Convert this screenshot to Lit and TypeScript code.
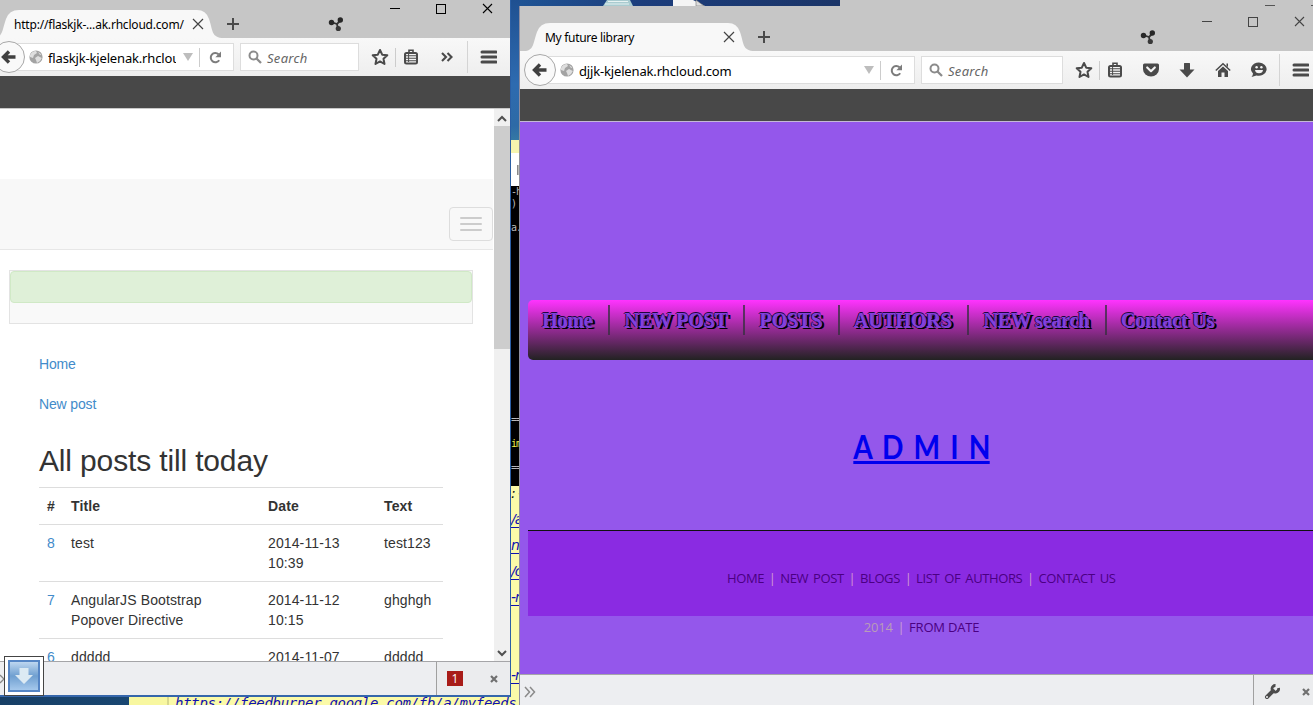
import { LitElement, html, svg, css } from "lit";
import { customElement, property } from "lit/decorators.js";

const closeX = (s: number) => svg`<path d="M1 1L${s - 1} ${s - 1}M${s - 1} 1L1 ${s - 1}"/>`;

const icons: Record<string, unknown> = {
  star: html`<svg width="18" height="18" viewBox="0 0 18 18"><path d="M9 2L11.2 6.7L16.3 7.3L12.5 10.8L13.5 16L9 13.4L4.5 16L5.5 10.8L1.7 7.3L6.8 6.7Z" fill="none" stroke="#4a4a4a" stroke-width="2" stroke-linejoin="round"/></svg>`,
  clip: html`<svg width="18" height="18" viewBox="0 0 18 18"><path d="M7 4.500V2.300h4V4.500" fill="none" stroke="#4a4a4a" stroke-width="1.600"/><rect x="3" y="5" width="12" height="10.500" rx="1.500" fill="#f4f4f4" stroke="#4a4a4a" stroke-width="2"/><path d="M4 7.800H14M4 10.300H14M4 12.800H14" stroke="#4a4a4a" stroke-width="1.100"/><path d="M6.600 6V14" stroke="#4a4a4a" stroke-width="1"/></svg>`,
  more: html`<svg width="14" height="12" viewBox="0 0 14 12"><path d="M2 2L6 6L2 10M7.5 2L11.5 6L7.5 10" fill="none" stroke="#4a4a4a" stroke-width="2.1"/></svg>`,
  menu: html`<svg width="18" height="16" viewBox="0 0 18 16"><path d="M3 3H17M3 8H17M3 13H17" stroke="#4a4a4a" stroke-width="3" stroke-linecap="round"/></svg>`,
  pocket: html`<svg width="18" height="18" viewBox="0 0 18 18"><path d="M2.5 2.5H15.5Q17 2.5 17 4V8A8 7.6 0 0 1 1 8V4Q1 2.500 2.500 2.500Z" fill="#4a4a4a"/><path d="M5.200 6.500L9 10.200L12.800 6.500" fill="none" stroke="#f4f4f4" stroke-width="2.200" stroke-linecap="round" stroke-linejoin="round"/></svg>`,
  down: html`<svg width="18" height="18" viewBox="0 0 18 18"><path d="M6 2.500Q6 2 6.500 2H11.500Q12 2 12 2.500V8.500H16.500L9 16.500L1.500 8.500H6Z" fill="#4a4a4a"/></svg>`,
  home: html`<svg width="18" height="18" viewBox="0 0 18 18"><path d="M1.800 9.500L9 2.800L16.200 9.500" fill="none" stroke="#4a4a4a" stroke-width="1.500"/><path d="M12.500 2.500H14V6L12.500 5Z M4 10L9 5.400L14 10V16H10.500V11.500H7.500V16H4Z" fill="#4a4a4a"/></svg>`,
  chat: html`<svg width="18" height="18" viewBox="0 0 18 18"><path d="M9 1.500A7.800 6.600 0 1 1 6.500 14.400L1.500 16Q3 14 3 12.500A7.800 6.600 0 0 1 9 1.500Z" fill="#4a4a4a"/><path d="M5 9H13Q12.500 12.300 9 12.300T5 9Z" fill="#f4f4f4"/><circle cx="6.600" cy="6.300" r="1.200" fill="#f4f4f4"/><circle cx="11.400" cy="6.300" r="1.200" fill="#f4f4f4"/></svg>`,
};

@customElement("browser-head")
export class BrowserHead extends LitElement {
  @property() tab = "";
  @property() url = "";
  @property({ type: Boolean, reflect: true }) narrow = false;

  static styles = css`
    :host { display: block; font-family: "Noto Sans", "Open Sans", sans-serif; color: #000; }
    svg { display: block; flex: none; }
    .title { height: 45px; background: #c6c6c6; display: flex; align-items: flex-end; position: relative; }
    :host([narrow]) .title { height: 38px; }
    .tab { position: relative; width: 228px; height: 28px; margin-left: 4px; display: flex; align-items: center; }
    :host([narrow]) .tab { margin-left: -7px; }
    .shape { position: absolute; left: 0; top: 0; }
    .label { position: relative; flex: 1; font-size: 12px; padding-left: 21px; white-space: nowrap; letter-spacing: -0.3px; }
    :host([narrow]) .label { letter-spacing: -0.2px; }
    .tab .x { position: relative; margin-right: 17px; }
    .plus { margin: 0 0 7px 5px; }
    .share { position: absolute; left: 620px; bottom: 6px; }
    .controls { position: absolute; display: flex; gap: 36px; left: 682px; top: 10px; align-items: center; }
    :host([narrow]) .share { left: 328px; }
    :host([narrow]) .controls { left: 390px; top: 3px; }
    .bar { height: 38px; background: linear-gradient(#f8f8f8, #eeeeee); display: flex; align-items: center; }
    .back { width: 30px; height: 30px; border: 1px solid #a8a8a8; border-radius: 50%; background: #f9f9f9; display: grid; place-items: center; margin-left: 4px; z-index: 1; flex: none; }
    :host([narrow]) .back { margin-left: -7px; }
    .field { box-sizing: border-box; height: 28px; background: #fff; border: 1px solid #ddd; display: flex; align-items: center; }
    .url { width: 376px; margin-left: -17px; padding-left: 20px; }
    :host([narrow]) .url { width: 226px; }
    .addr { flex: 1; min-width: 0; overflow: hidden; white-space: nowrap; font-size: 13px; margin: 1px 7px 0 5px; letter-spacing: -0.16px; }
    .sep { width: 1px; height: 19px; background: #ccc; }
    .drop { margin-right: 6px; }
    .reload { margin: 0 11px 0 9px; }
    .search { width: 142px; margin-left: 6px; padding-left: 7px; font-size: 13px; font-style: italic; color: #666; gap: 5px; letter-spacing: 0.3px; }
    .search span { margin-top: 2px; }
    :host([narrow]) .search { width: 119px; margin-left: 6px; }
    .tools { display: flex; align-items: center; margin-left: 12px; }
    .tools .sep { margin: 0 6px; }
    .rest { display: flex; gap: 18px; margin-left: 18px; align-items: center; }
    .edge { width: 1px; height: 32px; background: #d4d4d4; margin: 0 11px; }
    :host([narrow]) .rest { margin-left: 20px; }
    :host([narrow]) .edge { margin-left: 13px; }
    .dark { height: 32px; background: #484848; border-bottom: 1px solid #c4b9d8; }
    :host([narrow]) .dark { border-color: #c8c8c8; height: 32px; }
  `;

  render() {
    const ink = this.narrow ? "#000" : "#444";
    return html`
      <div class="title">
        <div class="tab">
          <svg class="shape" width="232" height="28"><path d="M0 28C10 28 9 20 13 9Q16 0 26 0H204Q213 0 216 9C220 20 218 28 231 28Z" fill="#f8f8f8"/></svg>
          <span class="label">${this.tab}</span>
          <svg class="x" width="12" height="12" fill="none" stroke="#444" stroke-width="1.200">${closeX(12)}</svg>
        </div>
        <svg class="plus" width="14" height="14"><path d="M7 1V13M1 7H13" stroke="#4a4a4a" stroke-width="2"/></svg>
        <svg class="share" width="16" height="16"><path d="M3 6L9 8L13 4M9 8L10 13" stroke="#333" stroke-width="1.800" fill="none"/><circle cx="3.500" cy="6.500" r="2.700" fill="#282828"/><circle cx="12.300" cy="4" r="2.700" fill="#282828"/><circle cx="10.300" cy="12.500" r="2.600" fill="#383838"/></svg>
        <div class="controls">
          <svg width="10" height="11"><path d="M0 5.500H10" stroke=${ink}/></svg>
          <svg width="10" height="11"><rect x="0.500" y="1.500" width="9" height="9" fill="none" stroke=${ink}/></svg>
          <svg width="11" height="11" fill="none" stroke=${ink} stroke-width="1.100">${closeX(11)}</svg>
        </div>
      </div>
      <div class="bar">
        <div class="back"><svg width="16" height="14"><path d="M14.500 7H3M8 1.500L2.500 7L8 12.500" fill="none" stroke="#404040" stroke-width="3.400"/></svg></div>
        <div class="field url">
          <svg width="14" height="14"><circle cx="7" cy="7" r="6.600" fill="#a3a3a3"/><path d="M1 5Q3 1 7 1L8 3L5 5L4 8L1 7ZM9 2L12.500 4.500L11 5ZM6 8L9 6L12.800 8L11 11L8 13L7 10Z" fill="#dedede"/></svg>
          <span class="addr">${this.url}</span>
          <svg class="drop" width="10" height="8"><path d="M0 0H10L5 8Z" fill="#bdbdbd"/></svg>
          <span class="sep"></span>
          <svg class="reload" width="13" height="13"><path d="M10.200 9.200A4.600 4.600 0 1 1 9.500 3.300" fill="none" stroke="#7c7c7c" stroke-width="2"/><path d="M12 0.500V6.200H6.300Z" fill="#7c7c7c"/></svg>
        </div>
        <div class="field search">
          <svg width="14" height="14"><circle cx="5.500" cy="5.500" r="4" fill="none" stroke="#8b8b8b" stroke-width="2"/><path d="M8.500 8.500L13 13" stroke="#8b8b8b" stroke-width="2.300"/></svg>
          <span>Search</span>
        </div>
        <div class="tools">
          ${icons.star}<span class="sep"></span>${icons.clip}
          <div class="rest">
            ${this.narrow ? icons.more : html`${icons.pocket}${icons.down}${icons.home}${icons.chat}`}
          </div>
          <span class="edge"></span>${icons.menu}
        </div>
      </div>
      <div class="dark"></div>
    `;
  }
}

@customElement("posts-page")
export class PostsPage extends LitElement {
  static styles = css`
    :host { display: flex; height: 552px; background: #fff; overflow: hidden; font: 14px/20px "Liberation Sans", Arial, sans-serif; color: #333; }
    .page { width: 494px; flex: none; overflow: hidden; }
    .nav { box-sizing: border-box; width: 493px; height: 71px; margin-top: 70px; background: #f8f8f8; border-bottom: 1px solid #e7e7e7; display: flex; justify-content: flex-end; padding-top: 28px; }
    .toggle { box-sizing: border-box; width: 44px; height: 34px; border: 1px solid #ddd; border-radius: 4px; display: flex; flex-direction: column; gap: 4px; align-items: center; justify-content: center; }
    .toggle i { width: 22px; height: 2px; background: #ccc; border-radius: 1px; }
    .panel { box-sizing: border-box; width: 464px; height: 54px; margin: 20px 0 0 9px; background: #f9f9f9; border: 1px solid #e3e3e3; }
    .alert { box-sizing: border-box; height: 32px; background: #dff0d8; border: 1px solid #d0e9c6; border-radius: 4px; }
    .body { margin: 30px 0 0 39px; width: 404px; }
    a { color: #428bca; }
    p { margin: 0 0 20px; letter-spacing: -0.15px; }
    h2 { font-size: 30px; font-weight: 400; line-height: 33px; margin: 30px 0 10px; letter-spacing: -0.15px; }
    table { width: 404px; table-layout: fixed; border-collapse: collapse; letter-spacing: 0.12px; }
    th, td { box-sizing: border-box; text-align: left; vertical-align: top; padding: 8px; border-top: 1px solid #ddd; }
    th:first-child { padding-right: 0; }
    td:first-child { padding-right: 0; }
    .c1 { width: 24px; } .c2 { width: 197px; } .c3 { width: 116px; }
    td:nth-child(2) { padding-right: 40px; }
    td:nth-child(3) { padding-right: 30px; }
    .scroll { width: 16px; background: #f0f0f0; display: flex; flex-direction: column; }
    .scroll svg { margin: 6px 3px 4px; display: block; }
    .thumb { height: 223px; background: #cdcdcd; }
    .fill { flex: 1; }
  `;
  render() {
    const rows = [
      ["8", "test", "2014-11-13 10:39", "test123"],
      ["7", "AngularJS Bootstrap Popover Directive", "2014-11-12 10:15", "ghghgh"],
      ["6", "ddddd", "2014-11-07", "ddddd"],
    ];
    return html`
      <div class="page">
        <div class="nav"><div class="toggle"><i></i><i></i><i></i></div></div>
        <div class="panel"><div class="alert"></div></div>
        <div class="body">
          <p><a>Home</a></p>
          <p><a>New post</a></p>
          <h2>All posts till today</h2>
          <table>
            <tr><th class="c1">#</th><th class="c2">Title</th><th class="c3">Date</th><th>Text</th></tr>
            ${rows.map((r) => html`<tr><td><a>${r[0]}</a></td><td>${r[1]}</td><td>${r[2]}</td><td>${r[3]}</td></tr>`)}
          </table>
        </div>
      </div>
      <div class="scroll">
        <svg width="10" height="7"><path d="M1 6L5 2L9 6" fill="none" stroke="#505050" stroke-width="2"/></svg>
        <div class="thumb"></div><div class="fill"></div>
        <svg width="10" height="7"><path d="M1 1L5 5L9 1" fill="none" stroke="#505050" stroke-width="2"/></svg>
      </div>
    `;
  }
}

@customElement("library-page")
export class LibraryPage extends LitElement {
  static styles = css`
    :host { display: block; height: 552px; background: #9457eb; overflow: hidden; padding-left: 8px; box-sizing: border-box; }
    nav { box-sizing: border-box; margin-top: 178px; height: 60px; width: 800px; border-radius: 5px; background: linear-gradient(#ff33ff, #222222); display: flex; padding-top: 5px; }
    nav a { height: 30px; box-sizing: border-box; padding: 3px 16px 0 14px; border-right: 2px solid rgba(52, 48, 62, 0.75); font: bold 20px/24px "Liberation Serif", "Times New Roman", serif; color: #8340dc; text-shadow: 0 -1px 0 #20063c, -1px 0 0 #20063c, 1px 1px 0 #8340dc, 2px 2px 0 #000, 3px 2px 0 #000; white-space: nowrap; letter-spacing: -0.2px; }
    nav a:last-child { border: 0; }
    .admin { margin-top: 67px; width: 787px; height: 42px; text-align: center; font: 700 32px/40px Lato, sans-serif; color: #0000ee; }
    .admin a { display: inline-block; height: 34px; border-bottom: 3px solid #0000ee; letter-spacing: -0.4px; word-spacing: 4.5px; transform: scaleX(0.88); }
    footer { margin-top: 61px; width: 800px; height: 85px; background: #8a2be2; border-top: 1px solid #111; font: 13px/20px "Open Sans", sans-serif; color: #4b0082; }
    .links { display: flex; padding: 37px 0 0 199px; white-space: nowrap; letter-spacing: -0.38px; word-spacing: 2px; }
    i { font-style: normal; color: #d19ad0; padding: 0 4.7px; }
    .date { width: 787px; display: flex; justify-content: center; font: 13px/20px "Open Sans", sans-serif; color: #4b0082; margin-top: 1px; letter-spacing: -0.2px; }
    .date b { font-weight: 400; color: #b99cb8; }
    .date i { color: #c9a0d0; }
  `;
  render() {
    const links = ["HOME", "NEW POST", "BLOGS", "LIST OF AUTHORS", "CONTACT US"];
    return html`
      <nav>${["Home", "NEW POST", "POSTS", "AUTHORS", "NEW search", "Contact Us"].map((n) => html`<a>${n}</a>`)}</nav>
      <div class="admin"><a>A D M I N</a></div>
      <footer><div class="links">${links.map((l, n) => html`${n ? html`<i>|</i>` : ""}<span>${l}</span>`)}</div></footer>
      <div class="date"><b>2014</b><i>|</i><span>FROM DATE</span></div>
    `;
  }
}

@customElement("app-root")
export class AppRoot extends LitElement {
  static styles = css`
    :host { display: block; position: relative; width: 1313px; height: 705px; overflow: hidden; background: #1d4878; }
    svg { display: block; }
    .top { position: absolute; left: 511px; top: 0; width: 329px; height: 6px; background: linear-gradient(90deg, #1f5596, #1c3d7c 40%, #1b3568); }
    .top svg { position: absolute; left: 88px; top: 0; }
    .behind { position: absolute; left: 840px; top: 0; width: 473px; height: 6px; background: #c6c6c6; }
    .behind svg { margin-left: 425px; }
    .strip { position: absolute; left: 511px; top: 0; width: 9px; height: 705px; display: flex; flex-direction: column; overflow: hidden; font: 10px/12px "DejaVu Sans Mono", monospace; color: #bbb; }
    .sky { height: 140px; flex: none; background: linear-gradient(#1f5091, #2e6bb0 60%, #2d6aa6 90%, #3478a4); }
    .gold { height: 13px; flex: none; background: #f6f5ae; }
    .paper { height: 33px; flex: none; background: #fff; display: flex; justify-content: flex-end; align-items: center; }
    .paper i { width: 2px; height: 10px; background: #bbb; border-left: 1px solid #888; }
    .term { height: 300px; flex: none; background: #000; white-space: pre; overflow: hidden; letter-spacing: -1px; }
    .term em { font-style: normal; color: #f2f24a; }
    .note { flex: 1; background: #fbfaa8; color: #1010b0; font: italic 14px/26px "DejaVu Sans", sans-serif; white-space: pre; overflow: hidden; letter-spacing: -1px; }
    .note u { display: block; height: 26px; text-underline-offset: 3px; }
    .note u:first-child { text-decoration: none; margin-top: -6px; color: #111; }
    .under { position: absolute; left: 0; top: 696px; width: 520px; height: 9px; display: flex; overflow: hidden; background: linear-gradient(90deg, #173f66, #1f5c92); }
    .margin { margin-left: 129px; width: 38px; background: #f8f7a0; border-right: 2px solid #d9d88e; }
    .sheet { flex: 1; background: #fbfaa8; color: #1010b0; font: italic 14px/15px "DejaVu Sans Mono", monospace; padding-left: 6px; letter-spacing: -0.3px; white-space: nowrap; }
    .left { position: absolute; left: 0; top: 0; width: 510px; height: 695px; border-right: 1px solid #2a5ea4; border-bottom: 2px solid #3566ab; background: #eeeff1; overflow: hidden; }
    .right { position: absolute; left: 519px; top: 6px; width: 793px; height: 699px; border-left: 1px solid #8e8ea0; overflow: hidden; }
    .addons { box-sizing: border-box; height: 34px; background: #edeef1; border-top: 1px solid #a5a5a8; display: flex; align-items: center; justify-content: space-between; }
    .group { box-sizing: border-box; width: 74px; height: 33px; border-left: 1px solid #a0a0a0; background: #ebecee; display: flex; align-items: center; padding-left: 10px; gap: 27px; }
    .count { width: 16px; height: 15px; background: #a81c18; color: #fff; font: 12px/15px "Open Sans", sans-serif; text-align: center; }
    .right .addons { padding-left: 4px; }
    .right .group { width: 60px; padding-left: 10px; gap: 22px; }
    .save { position: absolute; left: 4px; top: 656px; width: 36px; height: 36px; padding: 1px; border: 1px solid #444; background: #fff; display: grid; place-items: center; }
  `;
  render() {
    const x = html`<svg width="8" height="8"><path d="M1 1L7 7M7 1L1 7" stroke="#707070" stroke-width="2.200"/></svg>`;
    return html`
      <div class="top"><svg width="120" height="6"><path d="M4 6L8 0H31L34 6Z" fill="#a9cbd0"/><path d="M6 4H30M9 1.500H29" stroke="#e6f2f2"/><path d="M74 0H94L106 6H74Z" fill="#f4f4f4"/><path d="M97 0L105 6H97Z" fill="#ddd" stroke="#777" stroke-width=".6"/></svg></div>
      <div class="behind"><svg width="48" height="6"><path d="M0 5.500H10M46 5.500H48" stroke="#555"/></svg></div>
      <div class="strip">
        <div class="sky"></div><div class="gold"></div><div class="paper"><i></i></div>
        <div class="term">-h
)

a.















==
<em>
im</em>

==</div>
        <div class="note"><u>: -</u><u>/a</u><u>no</u><u>/o</u><u>-n</u><u></u><u></u><u>-n</u></div>
      </div>
      <div class="under"><div class="margin"></div><div class="sheet">https://feedburner.google.com/fb/a/myfeeds</div></div>
      <div class="left">
        <browser-head narrow tab="http://flaskjk-...ak.rhcloud.com/" url="flaskjk-kjelenak.rhcloud.com"></browser-head>
        <posts-page></posts-page>
        <div class="addons">
          <svg width="5" height="12"><path d="M0 2L4 6L0 10" fill="none" stroke="#888" stroke-width="1.300"/></svg>
          <div class="group"><span class="count">1</span>${x}</div>
        </div>
      </div>
      <div class="save">
        <svg width="32" height="32"><defs><linearGradient id="g" x1="0" y1="0" x2="0" y2="1"><stop offset="0" stop-color="#c3daf2"/><stop offset=".5" stop-color="#6f9fd0"/><stop offset="1" stop-color="#a9cbee"/></linearGradient></defs><rect x="1" y="1" width="30" height="30" fill="url(#g)" stroke="#5585c5" stroke-width="2"/><path d="M11.500 8H20.500V15H25L16 24L7 15H11.500Z" fill="#dceaf3"/></svg>
      </div>
      <div class="right">
        <browser-head tab="My future library" url="djjk-kjelenak.rhcloud.com"></browser-head>
        <library-page></library-page>
        <div class="addons">
          <svg width="12" height="12"><path d="M1 1L5.500 6L1 11M6 1L10.500 6L6 11" fill="none" stroke="#8a8a8a" stroke-width="1.500"/></svg>
          <div class="group"><svg width="16" height="16"><path d="M3 13L9 7" stroke="#4c4c4c" stroke-width="4" stroke-linecap="round"/><path d="M14.500 4A3.300 3.300 0 1 1 11.500 1.500" fill="none" stroke="#4c4c4c" stroke-width="2.800"/><circle cx="3" cy="13" r="1" fill="#eee"/></svg>${x}</div>
        </div>
      </div>
    `;
  }
}
